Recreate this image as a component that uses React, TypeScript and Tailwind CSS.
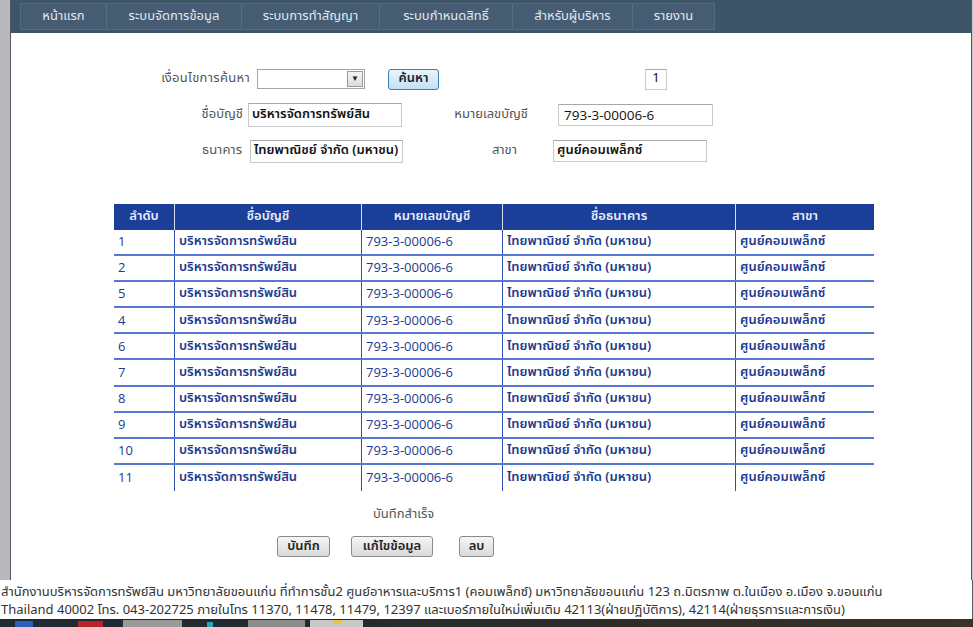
import React from "react";

const FONT = "font-['Tahoma','Noto_Sans_Thai','Noto_Sans','Liberation_Sans',sans-serif]";

const tabs = [
  { t: "หน้าแรก", w: "w-[85px]" },
  { t: "ระบบจัดการข้อมูล", w: "w-[135px]" },
  { t: "ระบบการทำสัญญา", w: "w-[138px]" },
  { t: "ระบบกำหนดสิทธิ์", w: "w-[133px]" },
  { t: "สำหรับผู้บริหาร", w: "w-[120px]" },
  { t: "รายงาน", w: "w-[82px]" },
];

const rows = ["1", "2", "5", "4", "6", "7", "8", "9", "10", "11"];

function TextBox({ w, h, children, bold = true }: { w: string; h: string; children?: React.ReactNode; bold?: boolean }) {
  return (
    <div
      className={`${w} ${h} flex items-center overflow-hidden whitespace-nowrap border border-[#c9c9c9] border-t-[#a9a9a9] bg-white px-[3px] text-[13px] text-[#111] ${bold ? "font-semibold" : ""}`}
    >
      {children}
    </div>
  );
}

function GrayButton({ w, children }: { w: string; children: React.ReactNode }) {
  return (
    <div
      className={`${w} flex h-[21px] items-center justify-center rounded-[3px] border border-[#8a8a8a] bg-gradient-to-b from-[#f6f6f6] to-[#d9d9d9] text-[13px] font-semibold text-[#222]`}
    >
      {children}
    </div>
  );
}

export default function App() {
  return (
    <div className={`h-[627px] w-[973px] overflow-hidden bg-white ${FONT}`}>
      <div className="flex h-[619px] w-[973px] flex-col">
        {/* upper frame */}
        <div className="flex h-[583px]">
          <div className="w-[10px] shrink-0 bg-[#b9b9bd]" />
          <div className="w-px shrink-0 bg-[#55565c]" />
          <div className="flex min-w-0 flex-1 flex-col">
            {/* nav */}
            <div className="flex h-[33px] items-start bg-[#3e5469] pl-[9px] pt-[3px]">
              <div className="flex h-[27px] border border-[#536a80] bg-[#455c73]">
                {tabs.map((tab, i) => (
                  <div
                    key={tab.t}
                    className={`${tab.w} flex items-center justify-center text-[13px] text-[#e3e8ee] ${i > 0 ? "border-l border-[#566e85]" : ""}`}
                  >
                    {tab.t}
                  </div>
                ))}
              </div>
            </div>

            {/* form */}
            <div className="flex flex-col pt-[28px] text-[13px] text-[#555]">
              <div className="flex h-[36px] items-center">
                <div className="w-[239px] text-right tracking-[0.3px]">เงื่อนไขการค้นหา</div>
                <div className="ml-[7px] flex h-[20px] w-[108px] items-center justify-end border border-[#a5a5a5] bg-white pr-px">
                  <div className="flex h-[16px] w-[16px] items-center justify-center border border-[#9a9a9a] bg-gradient-to-b from-[#f4f4f4] to-[#dcdcdc] text-[8px] text-[#222]">
                    ▼
                  </div>
                </div>
                <div className="ml-[23px] flex h-[21px] w-[51px] items-center justify-center rounded-[3px] border border-[#3c7fb1] bg-gradient-to-b from-[#eaf5fc] to-[#c3e0f5] text-[13px] font-semibold text-[#222]">
                  ค้นหา
                </div>
                <div className="ml-[206px] flex h-[21px] w-[22px] items-center justify-center border border-[#c9c9c9] border-t-[#a9a9a9] text-[13px] text-[#111]">
                  1
                </div>
              </div>
              <div className="flex h-[36px] items-center">
                <div className="w-[232px] text-right">ชื่อบัญชี</div>
                <div className="ml-[5px]">
                  <TextBox w="w-[154px]" h="h-[24px]">บริหารจัดการทรัพย์สิน</TextBox>
                </div>
                <div className="w-[126px] text-right">หมายเลขบัญชี</div>
                <div className="ml-[30px]">
                  <TextBox w="w-[155px]" h="h-[22px]" bold={false}>
                    <span className="pl-[2px] font-['Open_Sans','Liberation_Sans',sans-serif] text-[13.5px]">793-3-00006-6</span>
                  </TextBox>
                </div>
              </div>
              <div className="flex h-[36px] items-center">
                <div className="w-[231px] text-right">ธนาคาร</div>
                <div className="ml-[8px]">
                  <TextBox w="w-[153px]" h="h-[23px]">ไทยพาณิชย์ จำกัด (มหาชน)</TextBox>
                </div>
                <div className="w-[114px] text-right">สาขา</div>
                <div className="ml-[36px]">
                  <TextBox w="w-[154px]" h="h-[22px]">ศูนย์คอมเพล็กซ์</TextBox>
                </div>
              </div>
            </div>

            {/* table */}
            <div className="ml-[103px] mt-[35px] w-[760px]">
              <div className="grid h-[26px] grid-cols-[60px_187px_141px_233px_139px] bg-[#1b3e98] text-[13px] font-semibold text-[#e9eef8]">
                <div className="flex items-center justify-center">ลำดับ</div>
                <div className="flex items-center justify-center border-l border-[#d6def0]">ชื่อบัญชี</div>
                <div className="flex items-center justify-center border-l border-[#d6def0]">หมายเลขบัญชี</div>
                <div className="flex items-center justify-center border-l border-[#d6def0]">ชื่อธนาคาร</div>
                <div className="flex items-center justify-center border-l border-[#d6def0]">สาขา</div>
              </div>
              {rows.map((n, i) => (
                <div
                  key={n}
                  className={`grid h-[26.1px] grid-cols-[60px_187px_141px_233px_139px] text-[13px] text-[#1b3a8e] ${
                    i < rows.length - 1 ? "border-b-2 border-[#5677d2]" : ""
                  }`}
                >
                  <div className="flex items-center pl-[4px] font-['Open_Sans','Liberation_Sans',sans-serif]">{n}</div>
                  <div className="flex items-center border-l border-[#2f52b0] pl-[4px] font-semibold">บริหารจัดการทรัพย์สิน</div>
                  <div className="flex items-center border-l border-[#2f52b0] pl-[4px] font-['Open_Sans','Liberation_Sans',sans-serif]">
                    793-3-00006-6
                  </div>
                  <div className="flex items-center border-l border-[#2f52b0] pl-[4px] font-semibold">ไทยพาณิชย์ จำกัด (มหาชน)</div>
                  <div className="flex items-center border-l border-[#2f52b0] pl-[4px] font-semibold">ศูนย์คอมเพล็กซ์</div>
                </div>
              ))}
            </div>

            <div className="mt-[15px] flex h-[18px] items-center pl-[362px] text-[13px] text-[#555]">บันทึกสำเร็จ</div>
            <div className="mt-[12px] flex items-center pl-[266px]">
              <GrayButton w="w-[53px]">บันทึก</GrayButton>
              <div className="ml-[21px]">
                <GrayButton w="w-[82px]">แก้ไขข้อมูล</GrayButton>
              </div>
              <div className="ml-[26px]">
                <GrayButton w="w-[35px]">ลบ</GrayButton>
              </div>
            </div>
          </div>
          <div className="w-px shrink-0 bg-[#55565c]" />
          <div className="w-px shrink-0 bg-[#c8c8cc]" />
        </div>

        {/* footer */}
        <div className="flex flex-1 border-r border-[#55565c]">
          <div className="flex flex-col justify-center pl-px pt-[3px] text-[13px] leading-[18px] text-[#333]">
            <div className="whitespace-nowrap">
              สำนักงานบริหารจัดการทรัพย์สิน มหาวิทยาลัยขอนแก่น ที่ทำการชั้น2 ศูนย์อาหารและบริการ1 (คอมเพล็กซ์) มหาวิทยาลัยขอนแก่น 123 ถ.มิตรภาพ ต.ในเมือง อ.เมือง จ.ขอนแก่น
            </div>
            <div className="whitespace-nowrap">
              Thailand 40002 โทร. 043-202725 ภายในโทร 11370, 11478, 11479, 12397 และเบอร์ภายในใหม่เพิ่มเติม 42113(ฝ่ายปฏิบัติการ), 42114(ฝ่ายธุรการและการเงิน)
            </div>
          </div>
        </div>
      </div>

      {/* taskbar strip */}
      <div className="flex h-[8px] items-end bg-gradient-to-r from-[#1e2933] via-[#2a2a2a] to-[#3a3128]">
        <div className="ml-[15px] h-[6px] w-[18px] bg-[#2b5fb8]" />
        <div className="ml-[45px] h-[6px] w-[25px] bg-[#b8242a]" />
        <div className="ml-[20px] h-[7px] w-[59px] bg-[#9a9a9a]" />
        <div className="ml-[25px] h-[5px] w-[6px] bg-[#2aa6b8]" />
        <div className="ml-[35px] h-[7px] w-[57px] bg-[#8c8c8c]" />
        <div className="ml-[5px] flex h-[7px] w-[53px] justify-center bg-[#c8c8c8]">
          <div className="h-[4px] w-[8px] bg-[#e8c53a]" />
        </div>
      </div>
    </div>
  );
}
